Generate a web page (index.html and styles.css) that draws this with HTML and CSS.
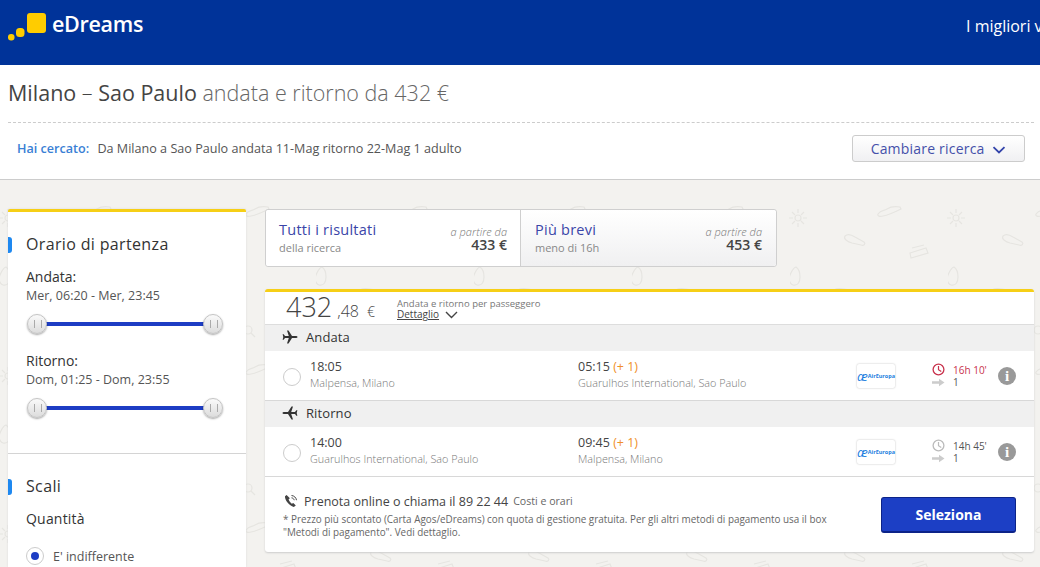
FILE: index.html
```html
<!DOCTYPE html>
<html lang="it">
<head>
  <meta charset="UTF-8">
  <meta name="viewport" content="width=device-width, initial-scale=1.0">
  <title>eDreams - Milano Sao Paulo</title>
  <link rel="stylesheet" href="styles.css">
</head>
<body>
  <header class="topbar">
    <div class="logo">
      <svg class="logo-mark" width="39" height="28" viewBox="0 0 39 28">
        <rect x="19" y="0" width="19" height="20" rx="3" fill="#fc0"/>
        <rect x="8" y="15" width="8.500" height="9" rx="3.500" fill="#fc0"/>
        <rect x="0" y="21" width="6.500" height="6.500" rx="3" fill="#fc0"/>
      </svg>
      <span class="logo-text">eDreams</span>
    </div>
    <div class="slogan">I migliori v</div>
  </header>

  <section class="summary">
    <h1 class="route">Milano <span class="dash">–</span> Sao Paulo <span class="rest">andata e ritorno da 432 €</span></h1>
    <div class="search-row">
      <div class="search-text"><b>Hai cercato:</b> Da Milano a Sao Paulo andata 11-Mag ritorno 22-Mag 1 adulto</div>
      <button class="change-btn">Cambiare ricerca
        <svg width="14" height="8" viewBox="0 0 14 8"><path d="M1.500 1.200 7 6.400l5.500-5.200" fill="none" stroke="#3344aa" stroke-width="1.800"/></svg>
      </button>
    </div>
  </section>

  <main class="content">
    <aside class="filters">
      <div class="filter-block times">
        <h2 class="filter-title">Orario di partenza</h2>
        <div class="time-label">Andata:</div>
        <div class="time-range">Mer, 06:20 - Mer, 23:45</div>
        <div class="slider"><span class="handle"></span><span class="handle"></span></div>
        <div class="time-label">Ritorno:</div>
        <div class="time-range">Dom, 01:25 - Dom, 23:55</div>
        <div class="slider"><span class="handle"></span><span class="handle"></span></div>
      </div>
      <div class="filter-block stops">
        <h2 class="filter-title">Scali</h2>
        <div class="stops-label">Quantità</div>
        <label class="stops-option"><span class="radio checked"></span>E' indifferente</label>
      </div>
    </aside>

    <div class="results">
      <div class="tabs">
        <div class="tab active">
          <div>
            <div class="tab-name">Tutti i risultati</div>
            <div class="tab-sub">della ricerca</div>
          </div>
          <div class="tab-price"><i>a partire da</i><b>433 €</b></div>
        </div>
        <div class="tab">
          <div>
            <div class="tab-name">Più brevi</div>
            <div class="tab-sub">meno di 16h</div>
          </div>
          <div class="tab-price"><i>a partire da</i><b>453 €</b></div>
        </div>
      </div>

      <article class="card">
        <div class="price-row">
          <div class="price"><span class="price-int">432</span><span class="price-dec">,48</span><span class="price-cur">€</span></div>
          <div class="price-info">
            <div>Andata e ritorno per passeggero</div>
            <div class="detail"><u>Dettaglio</u>
              <svg width="13" height="8" viewBox="0 0 13 8"><path d="M1 1l5.500 5.500L12 1" fill="none" stroke="#444" stroke-width="1.400"/></svg>
            </div>
          </div>
        </div>

        <div class="leg-head">
          <svg width="16" height="14" viewBox="0 0 16 14"><path d="M15.500 7c0-.6-.8-1-2-1H10L6.500.5H5L6.800 6H3L1.700 4.200H.6L1.300 7 .6 9.800h1.100L3 8h3.800L5 13.500h1.500L10 8h3.500c1.200 0 2-.4 2-1z" fill="#333"/></svg>
          Andata
        </div>
        <div class="leg">
          <span class="radio"></span>
          <div class="stop dep"><div class="hour">18:05</div><div class="airport">Malpensa, Milano</div></div>
          <div class="stop arr"><div class="hour">05:15 <em>(+ 1)</em></div><div class="airport">Guarulhos International, Sao Paulo</div></div>
          <div class="airline"><span class="airline-mark">æ</span>AirEuropa</div>
          <div class="duration long">
            <svg width="13" height="13" viewBox="0 0 13 13"><circle cx="6.500" cy="6.500" r="5.400" fill="none" stroke="currentColor" stroke-width="1.300"/><path d="M6.500 3v3.700l2.800 1.800" fill="none" stroke="currentColor" stroke-width="1.200"/></svg>
            <span>16h 10'</span>
            <svg width="13" height="9" viewBox="0 0 13 9"><path d="M0 3.300h7V.8l5.500 3.700L7 8.200V5.700H0z" fill="#ccc"/></svg>
            <span class="stops-count">1</span>
          </div>
          <span class="info">i</span>
        </div>

        <div class="leg-head back">
          <svg width="16" height="14" viewBox="0 0 16 14"><path d="M.5 7c0-.6.8-1 2-1H6L9.500.5H11L9.200 6H13l1.300-1.800h1.100L14.700 7l.7 2.800h-1.100L13 8H9.200L11 13.500H9.500L6 8H2.500C1.300 8 .5 7.600.5 7z" fill="#333"/></svg>
          Ritorno
        </div>
        <div class="leg">
          <span class="radio"></span>
          <div class="stop dep"><div class="hour">14:00</div><div class="airport">Guarulhos International, Sao Paulo</div></div>
          <div class="stop arr"><div class="hour">09:45 <em>(+ 1)</em></div><div class="airport">Malpensa, Milano</div></div>
          <div class="airline"><span class="airline-mark">æ</span>AirEuropa</div>
          <div class="duration">
            <svg width="13" height="13" viewBox="0 0 13 13"><circle cx="6.500" cy="6.500" r="5.400" fill="none" stroke="#bbb" stroke-width="1.300"/><path d="M6.500 3v3.700l2.800 1.800" fill="none" stroke="#bbb" stroke-width="1.200"/></svg>
            <span>14h 45'</span>
            <svg width="13" height="9" viewBox="0 0 13 9"><path d="M0 3.300h7V.8l5.500 3.700L7 8.200V5.700H0z" fill="#ccc"/></svg>
            <span class="stops-count">1</span>
          </div>
          <span class="info">i</span>
        </div>

        <div class="card-foot">
          <div class="foot-text">
            <div class="phone-line">
              <svg width="14" height="14" viewBox="0 0 14 14"><path d="M2.600 1 1 2.300c-.4 3.800 4.200 9.600 8.800 10.700l2-1.400-2.500-2.700-1.500.8C6.400 8.900 5 7 4.600 5.300l1.300-1z" fill="#444"/><path d="M7.500 1.500c2.600.2 4.600 2 5 4.700M7.500 3.800c1.300.1 2.400 1 2.700 2.400" fill="none" stroke="#444" stroke-width="1"/></svg>
              <span class="phone-main">Prenota online o chiama il 89 22 44</span>
              <span class="phone-cost">Costi e orari</span>
            </div>
            <p class="foot-note">* Prezzo più scontato (Carta Agos/eDreams) con quota di gestione gratuita. Per gli altri metodi di pagamento usa il box "Metodi di pagamento". Vedi dettaglio.</p>
          </div>
          <button class="select-btn">Seleziona</button>
        </div>
      </article>
    </div>
  </main>
</body>
</html>
```

FILE: styles.css
```css
* {
  box-sizing: border-box;
}

html, body {
  height: 567px;
  overflow: hidden;
}

body {
  margin: 0;
  width: 1040px;
  font-family: "Open Sans", sans-serif;
  color: #444;
  background: #f3f2ef;
}

/* top bar */
.topbar {
  height: 65px;
  background: #003399;
  display: flex;
  justify-content: space-between;
  padding: 13px 0 0 8px;
  color: #fff;
}

.logo {
  display: flex;
  align-items: flex-start;
}

.logo-mark {
  display: block;
  margin-right: 5px;
}

.logo-text {
  font-size: 21.500px;
  font-weight: 600;
  line-height: 22px;
  letter-spacing: -.3px;
}

.slogan {
  width: 74px;
  font-size: 16px;
  line-height: 26px;
  white-space: nowrap;
  overflow: hidden;
}

/* summary */
.summary {
  height: 115px;
  background: #fff;
  border-bottom: 1px solid #ccc;
  padding: 0 6px 0 8px;
}

.route {
  margin: 0;
  height: 58px;
  padding-top: 12px;
  border-bottom: 1px dashed #ccc;
  font-size: 21.500px;
  line-height: 32px;
  font-weight: 400;
  color: #444;
}

.route .dash {
  font-weight: 300;
}

.route .rest {
  font-weight: 300;
  color: #666;
}

.search-row {
  display: flex;
  justify-content: space-between;
  align-items: center;
  padding: 12px 9px 0 9px;
}

.search-text {
  font-size: 12.600px;
  color: #555;
}

.search-text b {
  font-weight: 600;
  color: #3a7fd5;
  margin-right: 5px;
}

.change-btn {
  width: 173px;
  height: 27px;
  padding: 0;
  border: 1px solid #ccc;
  border-radius: 3px;
  background: linear-gradient(#fff, #f0f0f2);
  font: 14px "Open Sans", sans-serif;
  letter-spacing: .2px;
  color: #4450aa;
}

.change-btn svg {
  margin-left: 4px;
}

/* main area */
.content {
  display: flex;
  align-items: flex-start;
  gap: 19px;
  height: 387px;
  overflow: hidden;
  padding: 29px 6px 0 8px;
  background-color: #f3f2ef;
  background-image: url("data:image/svg+xml,%3Csvg xmlns='http://www.w3.org/2000/svg' width='158' height='158' fill='none' stroke='%23e6e5e1' stroke-width='1.200'%3E%3Ccircle cx='8' cy='38' r='3'/%3E%3Cpath d='M8 29v4M8 43v4M-1 38h4M13 38h4M2 32l3 3M11 41l3 3M14 32l-3 3M5 41l-3 3M166 29v4M166 43v4M157 38h4'/%3E%3Cpath d='M88 34c3-4 6-3 9-5s7-3 13-2l1 2c-6 3-12 6-18 7-3 1-6 0-5-2z'/%3E%3Cpath d='M55 56c3-3 7-1 10 1l9 5c2 2 0 4-3 3l-9-2c-4-1-9-4-7-7z'/%3E%3Cpath d='M120 73l16-5 2 5-17 5zM122 68l12-3'/%3E%3Cpath d='M3 105c-3-1-5-5-3-10s3-7 6-8c3 2 4 5 4 10s-2 9-7 8z'/%3E%3Cpath d='M42 113c1-4 6-5 12-4l6 1-1 5'/%3E%3Ccircle cx='90' cy='150' r='4'/%3E%3Cpath d='M93 153l4 4'/%3E%3C/svg%3E");
}

/* filters */
.filters {
  width: 238px;
  height: 358px;
  flex-shrink: 0;
  background: #fff;
  border-top: 3px solid #f6cf16;
  border-radius: 2px 2px 0 0;
  box-shadow: 0 0 2px #d5d5d5;
}

.filter-block {
  padding: 0 18px;
}

.times {
  height: 242px;
  padding-top: 21px;
  border-bottom: 1px solid #d4d4d4;
}

.stops {
  padding-top: 21px;
}

.filter-title {
  position: relative;
  margin: 0;
  font-size: 16px;
  line-height: 22px;
  font-weight: 400;
  color: #333;
  letter-spacing: .35px;
}

.filter-title::before {
  content: "";
  position: absolute;
  left: -18px;
  top: 4px;
  width: 4px;
  height: 16px;
  background: #1e88f0;
  border-radius: 0 3px 3px 0;
}

.time-label {
  margin-top: 12px;
  font-size: 14px;
  line-height: 20px;
  color: #333;
}

.time-range {
  font-size: 12.500px;
  line-height: 18px;
  color: #555;
}

.slider {
  position: relative;
  display: flex;
  justify-content: space-between;
  align-items: center;
  width: 196px;
  height: 22px;
  margin: 8px 0 16px 1px;
}

.slider::before {
  content: "";
  position: absolute;
  left: 10px;
  right: 10px;
  top: 9px;
  height: 4px;
  background: #1d3dc4;
}

.handle {
  position: relative;
  width: 20px;
  height: 20px;
  border: 1px solid #c4c4c4;
  border-radius: 50%;
  background: linear-gradient(#fafafa, #dcdcdc);
  box-shadow: 0 1px 2px rgba(0,0,0,.35);
}

.handle::before {
  content: "";
  position: absolute;
  left: 6px;
  top: 5px;
  width: 6px;
  height: 8px;
  border-left: 1px solid #aaa;
  border-right: 1px solid #aaa;
}

.stops-label {
  margin-top: 12px;
  font-size: 14px;
  line-height: 20px;
  color: #333;
  letter-spacing: .2px;
}

.stops-option {
  display: flex;
  align-items: center;
  gap: 9px;
  margin-top: 18px;
  font-size: 12.500px;
  color: #555;
}

/* radio */
.radio {
  display: block;
  width: 18px;
  height: 18px;
  flex-shrink: 0;
  border: 1px solid #ccc;
  border-radius: 50%;
  background: #fff;
}

.radio.checked {
  position: relative;
}

.radio.checked::after {
  content: "";
  position: absolute;
  left: 4px;
  top: 4px;
  width: 8px;
  height: 8px;
  border-radius: 50%;
  background: #1d3dc4;
}

/* tabs */
.results {
  width: 769px;
}

.tabs {
  display: flex;
  width: 512px;
  height: 58px;
  border: 1px solid #cfcfcf;
  border-radius: 3px;
  background: #fff;
}

.tab {
  flex: 1;
  display: flex;
  justify-content: space-between;
  padding: 10px 14px 0 14px;
  background: linear-gradient(#fff, #f0f0f1);
  border-radius: 0 3px 3px 0;
}

.tab.active {
  flex: 0 0 255px;
  padding-left: 13px;
  padding-right: 13px;
  background: #fff;
  border-right: 1px solid #cfcfcf;
  border-radius: 3px 0 0 3px;
}

.tab-name {
  font-size: 14.500px;
  line-height: 19px;
  color: #3a45a8;
  letter-spacing: .25px;
}

.tab-sub {
  font-size: 11px;
  line-height: 16px;
  margin-top: 1px;
  color: #888;
}

.tab-price {
  display: flex;
  flex-direction: column;
  align-items: flex-end;
  padding-top: 5px;
}

.tab-price i {
  font-size: 11px;
  line-height: 13px;
  font-weight: 300;
  color: #777;
}

.tab-price b {
  font-size: 14px;
  line-height: 13px;
  font-weight: 600;
  color: #444;
}

/* flight card */
.card {
  height: 263px;
  margin-top: 22px;
  background: #fff;
  border-top: 3px solid #f6cf16;
  border-radius: 3px;
  box-shadow: 0 1px 2px #ccc;
}

.price-row {
  display: flex;
  height: 33px;
  padding-left: 21px;
  border-bottom: 1px solid #ddd;
}

.price {
  width: 111px;
  color: #444;
  white-space: nowrap;
}

.price-int {
  font-size: 27px;
  line-height: 30px;
  font-weight: 300;
}

.price-dec {
  margin-left: 5px;
  font-size: 16px;
  font-weight: 300;
}

.price-cur {
  margin-left: 8px;
  font-size: 14px;
  font-weight: 300;
}

.price-info {
  padding-top: 6px;
  font-size: 9.500px;
  line-height: 11px;
  color: #777;
}

.detail {
  display: flex;
  align-items: center;
  gap: 6px;
  height: 11px;
  color: #444;
  font-size: 10px;
}

.leg-head {
  display: flex;
  align-items: center;
  gap: 8px;
  height: 26px;
  padding: 0 0 3px 17px;
  background: #f0f0f0;
  font-size: 13px;
  color: #333;
  letter-spacing: .1px;
}

.leg-head.back {
  border-top: 1px solid #d8d8d8;
  height: 27px;
}

.leg {
  display: flex;
  align-items: center;
  height: 49px;
  padding-left: 18px;
}

.leg .radio {
  margin-top: 2px;
}

.stop {
  margin-top: -2px;
}

.dep {
  width: 277px;
  padding-left: 9px;
}

.arr {
  width: 279px;
}

.hour {
  font-size: 12.500px;
  line-height: 16px;
  color: #444;
}

.hour em {
  font-style: normal;
  color: #f0902a;
}

.airport {
  font-size: 10.800px;
  line-height: 15px;
  font-weight: 300;
  color: #777;
}

.airline {
  display: flex;
  align-items: center;
  justify-content: center;
  width: 38px;
  height: 24px;
  margin-top: 1px;
  border-radius: 2px;
  background: #fff;
  box-shadow: 0 0 2px #bbb;
  font-size: 5.500px;
  font-weight: 700;
  color: #1e7fe0;
  white-space: nowrap;
}

.airline-mark {
  font-size: 13px;
  font-weight: 400;
  font-style: italic;
  line-height: 12px;
}

.duration {
  display: grid;
  grid-template-columns: 13px auto;
  column-gap: 8px;
  align-items: center;
  justify-items: center;
  width: 54px;
  margin-left: 37px;
  font-size: 10px;
  line-height: 12px;
  color: #555;
  white-space: nowrap;
}

.duration span {
  justify-self: start;
}

.duration.long {
  color: #c8324c;
}

.duration .stops-count {
  color: #555;
}

.info {
  width: 18px;
  height: 18px;
  margin-left: 12px;
  border-radius: 50%;
  background: #999;
  color: #fff;
  font: 700 15px/18px "Liberation Serif", serif;
  text-align: center;
}

/* footer of the card */
.card-foot {
  display: flex;
  justify-content: space-between;
  height: 75px;
  padding: 15px 18px 0 18px;
  border-top: 1px solid #d8d8d8;
}

.foot-text {
  width: 552px;
}

.phone-line {
  display: flex;
  align-items: center;
  height: 18px;
}

.phone-line svg {
  margin: 0 6px 0 1px;
}

.phone-main {
  font-size: 12.500px;
  color: #444;
}

.phone-cost {
  margin-left: 5px;
  font-size: 10.600px;
  color: #666;
}

.foot-note {
  margin: 3px 0 0;
  font-size: 9.900px;
  line-height: 13px;
  color: #666;
}

.select-btn {
  width: 135px;
  height: 36px;
  margin-top: 5px;
  border: 1px solid #0c2388;
  border-bottom-width: 2px;
  border-radius: 3px;
  background: #1c3fc5;
  color: #fff;
  font: 700 14px "Open Sans", sans-serif;
}
```
